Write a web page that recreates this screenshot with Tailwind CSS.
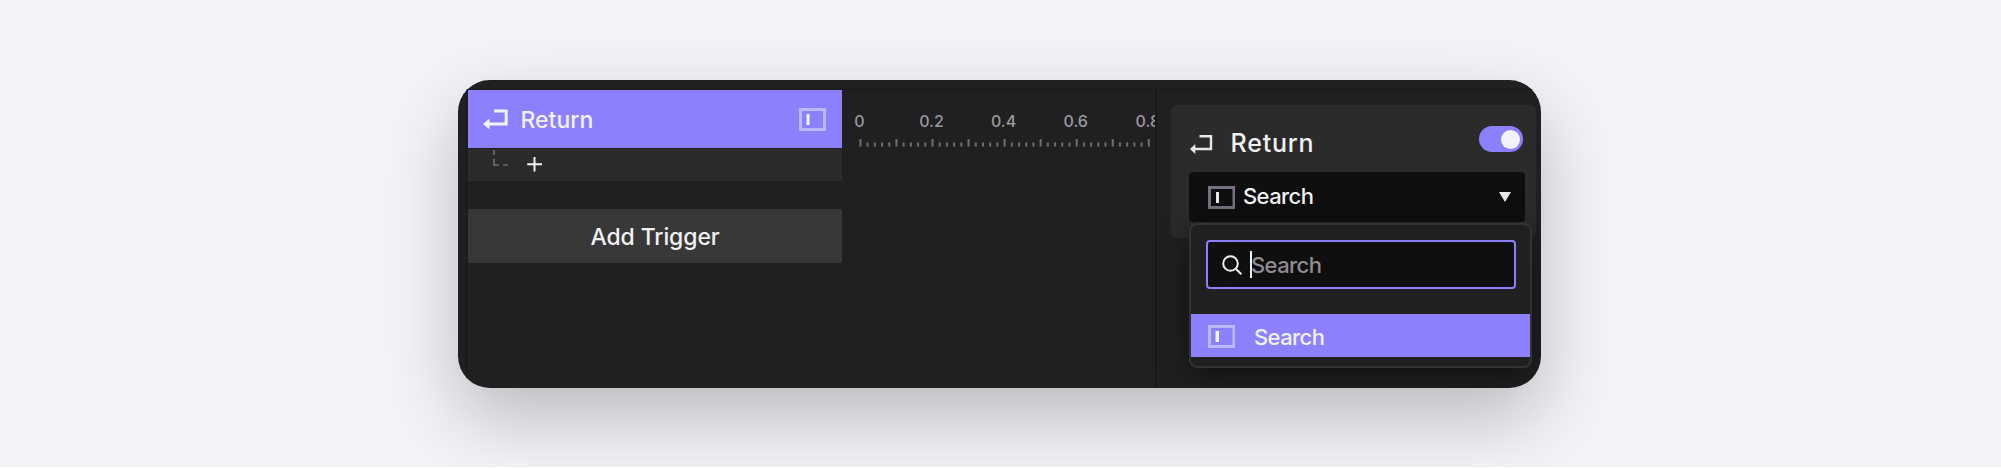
<!DOCTYPE html>
<html lang="en">
<head>
  <meta charset="UTF-8"/>
  <meta name="viewport" content="width=device-width, initial-scale=1.0"/>
  <title>Return Trigger</title>
  <script src="https://cdn.jsdelivr.net/npm/@tailwindcss/browser@4"></script>
</head>
<body class="h-[468px] overflow-hidden bg-[#f2f4f8] border-b border-white pt-20 pl-[458px] font-['Inter',sans-serif] text-[#f1f1f4]">

  <!-- window -->
  <div class="flex w-[1083px] h-[307.5px] rounded-[32px] overflow-hidden bg-[#202020] shadow-[0_30px_76px_rgba(0,0,0,0.24)]">

    <!-- layers -->
    <div class="w-[384px] shrink-0 pt-[9px] pl-2">
      <div class="h-full border-t border-l border-[#181818] pl-px">
        <div class="flex items-center w-[374px] h-[58px] bg-[#8d80fd] pl-[15px] pr-4">
          <svg class="w-[25px] h-[21px]" viewBox="0 0 25 21" fill="none">
            <path d="M11 2H23.2V15H6" stroke="#f1f1f8" stroke-width="3"/>
            <path d="M0 15L6.5 9.5V20.5Z" fill="#f1f1f8"/>
          </svg>
          <span class="ml-[12.5px] mt-0.5 text-[23px] leading-7 font-medium">Return</span>
          <svg class="ml-auto w-[27px] h-6" viewBox="0 0 27 24" fill="none">
            <rect x="1.5" y="2.5" width="24" height="20" stroke="#c0b8fd" stroke-width="3"/>
            <rect x="7.5" y="7" width="3" height="11" fill="#f7f6ff"/>
          </svg>
        </div>
        <div class="flex w-[374px] h-8 mt-px bg-[#2b2b2b] pl-6">
          <svg class="w-[52px] h-8" viewBox="0 0 52 32" fill="none">
            <path d="M2 1V6M2 10V16H7M11 16H16" stroke="#6c6a75" stroke-width="1.7"/>
            <path d="M42.5 8V22.5M35.2 15.2H50" stroke="#f1f1f4" stroke-width="2"/>
          </svg>
        </div>
        <div class="flex items-center justify-center w-[374px] h-[54px] mt-7 rounded-xs bg-[#383838] pt-0.5 text-[23px] font-medium tracking-[-0.1px]"><span>Add Trigger</span></div>
      </div>
    </div>

    <!-- timeline ruler -->
    <div class="w-[313px] shrink-0 pt-[9px]">
      <div class="h-full border-t border-[#181818] overflow-hidden">
        <svg class="w-[313px] h-[80px]" viewBox="0 0 313 80">
          <g id="ruler" fill="#9a999f" font-size="16" font-weight="500" text-anchor="middle"></g>
        </svg>
      </div>
    </div>

    <!-- properties -->
    <div class="w-[386px] shrink-0 pt-[9px]">
      <div class="h-full border-t border-l-2 border-[#181818] pt-[15px] pl-3.5">
        <div class="relative w-[365px] h-[133px] rounded-md bg-[#2b2b2b] px-[18px]">
          <div class="flex items-center h-[67px] pr-[1px]">
            <svg class="mt-[10px] w-6 h-5" viewBox="0 0 24 20" fill="none">
              <path d="M10.5 2.2H22V15H5" stroke="#e8e8ea" stroke-width="2.4"/>
              <path d="M1 15L6.3 10V20Z" fill="#e8e8ea"/>
            </svg>
            <span class="ml-[17.5px] mt-2 text-[25px] leading-8 font-medium tracking-[0.8px]">Return</span>
            <div class="ml-auto mt-px mr-[-6px] flex items-center justify-end w-[44px] h-[26px] rounded-full bg-[#8d80fd] pr-[3px]">
              <div class="w-[19px] h-[19px] rounded-full bg-[#f2f3f8]"></div>
            </div>
          </div>
          <div class="flex items-center w-[336px] h-[50px] rounded bg-[#0f0f0f] pl-[18px] pr-[14px]">
            <svg class="w-7 h-6" viewBox="0 0 28 24" fill="none">
              <rect x="2.5" y="2.5" width="24.5" height="20" stroke="#74727e" stroke-width="3"/>
              <rect x="9" y="7" width="3" height="11" fill="#e8e8ea"/>
            </svg>
            <span class="ml-2 mb-0.5 text-[22px] leading-7 font-medium tracking-[-0.6px]">Search</span>
            <svg class="ml-auto w-3 h-[10px]" viewBox="0 0 12 10"><path d="M0 0H12L6 10Z" fill="#e8e8ea"/></svg>
          </div>

          <!-- dropdown -->
          <div class="absolute left-[18px] top-[118px] w-[343px] h-[145px] rounded-lg border-2 border-[#333333] bg-[#202020] pt-[15px] shadow-[0_8px_32px_rgba(0,0,0,0.5)]">
            <div class="flex items-center ml-[15px] w-[310px] h-[49px] rounded border-2 border-[#8d80fd] bg-[#0f0f0f] pl-[14px]">
              <svg class="w-5 h-5" viewBox="0 0 20 20" fill="none" stroke="#f1f1f4" stroke-width="2">
                <circle cx="8.5" cy="8.5" r="7.3"/>
                <path d="M13.8 13.8L19.3 19.3"/>
              </svg>
              <div class="ml-2 w-[2px] h-[27px] bg-[#f1f1f4]"></div>
              <span class="ml-[-1px] text-[22px] leading-7 font-medium tracking-[-0.6px] text-[#8f8e93]">Search</span>
            </div>
            <div class="flex items-center mt-[25px] h-[43px] bg-[#8d80fd] pl-4">
              <svg class="w-7 h-6" viewBox="0 0 28 24" fill="none">
                <rect x="2.5" y="2.5" width="24.5" height="20" stroke="#c0b8fd" stroke-width="3"/>
                <rect x="8.5" y="7" width="3.5" height="11" fill="#f7f6ff"/>
              </svg>
              <span class="ml-[19px] mt-0.5 text-[22px] leading-7 font-medium tracking-[-0.6px]">Search</span>
            </div>
          </div>
        </div>
      </div>
    </div>
  </div>

  <script>
    const ruler = document.getElementById("ruler");
    let marks = "";
    for (let i = 0; i <= 40; i++) {
      const x = 17.4 + i * 7.21;
      const top = i % 5 === 0 ? 49 : 52.5;
      marks += `<rect x="${x}" y="${top}" width="2" height="${56.5 - top}" fill="#706e79"/>`;
      if (i % 10 === 0) marks += `<text x="${x}" y="36.5">${i ? (i / 50).toFixed(1) : 0}</text>`;
    }
    ruler.innerHTML = marks;
  </script>
</body>
</html>
